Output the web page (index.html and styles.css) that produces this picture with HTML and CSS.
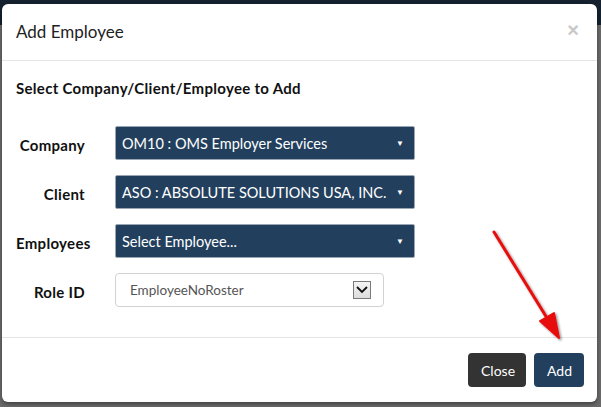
FILE: index.html
```html
<!DOCTYPE html>
<html>

<head>
    <title>Add Employee</title>
    <link rel="stylesheet" href="styles.css">
</head>

<body>
    <div class="backdrop">
        <div class="navbar"></div>
    </div>

    <div class="modal">
        <div class="modal-header">
            <h3 class="modal-title">Add Employee</h3>
            <span class="close-x">&times;</span>
        </div>

        <div class="modal-body">
            <h4 class="subheading">Select Company/Client/Employee to Add</h4>

            <div class="form-row">
                <label>Company</label>
                <div class="dark-select">
                    <span>OM10 : OMS Employer Services</span>
                    <span class="caret">&#9660;</span>
                </div>
            </div>

            <div class="form-row">
                <label>Client</label>
                <div class="dark-select">
                    <span>ASO : ABSOLUTE SOLUTIONS USA, INC.</span>
                    <span class="caret">&#9660;</span>
                </div>
            </div>

            <div class="form-row">
                <label>Employees</label>
                <div class="dark-select">
                    <span>Select Employee...</span>
                    <span class="caret">&#9660;</span>
                </div>
            </div>

            <div class="form-row">
                <label>Role ID</label>
                <div class="plain-select">
                    <span>EmployeeNoRoster</span>
                    <span class="drop-btn">
                        <svg width="12" height="8" viewBox="0 0 12 8">
                            <polyline points="1,1 6,6 11,1" fill="none" stroke="#111" stroke-width="1.8" />
                        </svg>
                    </span>
                </div>
            </div>
        </div>

        <div class="modal-footer">
            <button class="btn btn-close">Close</button>
            <button class="btn btn-add">Add</button>
        </div>
    </div>

    <!-- hand drawn pointer to the Add button -->
    <svg class="pointer" width="601" height="407" viewBox="0 0 601 407">
        <defs>
            <filter id="shadow" x="-20%" y="-20%" width="140%" height="140%">
                <feDropShadow dx="1.5" dy="1.5" stdDeviation="1.2" flood-color="#000" flood-opacity="0.45" />
            </filter>
        </defs>
        <g filter="url(#shadow)" stroke="#e8100e" stroke-width="3" stroke-linecap="round" fill="#e8100e">
            <line x1="494" y1="232" x2="555" y2="331" />
            <polygon points="559,338 540,321 554,313" stroke-width="2" stroke-linejoin="round" />
        </g>
    </svg>
</body>

</html>
```

FILE: styles.css
```css
body {
    margin: 0;
    width: 601px;
    height: 407px;
    overflow: hidden;
    background-color: #6a6a6a;
    font-family: Lato, "Noto Sans", sans-serif;
    position: relative;
}

.backdrop {
    height: 407px;
}

.navbar {
    height: 25px;
    background-color: #15212f;
}

.modal {
    position: absolute;
    top: 4px;
    left: 2px;
    width: 595px;
    height: 398px;
    background-color: #fff;
    border-radius: 6px;
    display: flex;
    flex-direction: column;
    box-shadow: 0 2px 4px rgba(0, 0, 0, 0.4);
}

.modal-header {
    display: flex;
    align-items: center;
    justify-content: space-between;
    padding: 15px 15px 15px 14px;
    border-bottom: 1px solid #e5e5e5;
}

.modal-title {
    margin: 0;
    font-size: 17px;
    font-weight: normal;
    line-height: 26px;
    color: #222;
}

.close-x {
    font-family: "Liberation Sans", Arial, sans-serif;
    font-size: 20px;
    font-weight: bold;
    color: #c8c8c8;
    line-height: 20px;
    margin-right: 3px;
    margin-top: -4px;
}

.modal-body {
    flex: 1;
    padding: 17px 15px 15px 14px;
}

.subheading {
    margin: 0 0 28px 0;
    font-size: 15px;
    letter-spacing: 0.3px;
    font-weight: bold;
    line-height: 20px;
    color: #111;
}

.form-row {
    display: flex;
    align-items: center;
    margin-bottom: 15px;
}

.form-row label {
    width: 69px;
    flex-shrink: 0;
    white-space: nowrap;
    text-align: right;
    font-size: 15px;
    letter-spacing: 0.3px;
    font-weight: bold;
    color: #111;
    margin-right: 30px;
    margin-top: 4px;
}

.dark-select {
    width: 300px;
    height: 34px;
    box-sizing: border-box;
    display: flex;
    align-items: center;
    justify-content: space-between;
    padding: 0 10px 0 6px;
    background-color: #233f5e;
    border: 1px solid #9aa6b4;
    border-radius: 2px;
    color: #fff;
    font-size: 14.5px;
}

.caret {
    font-size: 8px;
    color: #fff;
}

.plain-select {
    width: 269px;
    height: 34px;
    box-sizing: border-box;
    display: flex;
    align-items: center;
    justify-content: space-between;
    padding: 0 12px 0 14px;
    border: 1px solid #d2d2d2;
    border-radius: 4px;
    color: #555;
    font-size: 13.5px;
}

.drop-btn {
    width: 18px;
    height: 18px;
    box-sizing: border-box;
    border: 1px solid #7a7a7a;
    background: linear-gradient(#f4f4f4, #dcdcdc);
    display: flex;
    align-items: center;
    justify-content: center;
}

.modal-footer {
    display: flex;
    justify-content: flex-end;
    gap: 8px;
    padding: 15px 13px 15px 15px;
    border-top: 1px solid #e5e5e5;
}

.btn {
    height: 34px;
    border: none;
    border-radius: 4px;
    color: #fff;
    font-family: Lato, "Noto Sans", sans-serif;
    font-size: 14px;
    padding: 0 13px;
}

.btn-close {
    background-color: #333;
    width: 58px;
}

.btn-add {
    background-color: #233f5e;
    width: 50px;
}

.pointer {
    position: absolute;
    top: 0;
    left: 0;
    pointer-events: none;
}
```
